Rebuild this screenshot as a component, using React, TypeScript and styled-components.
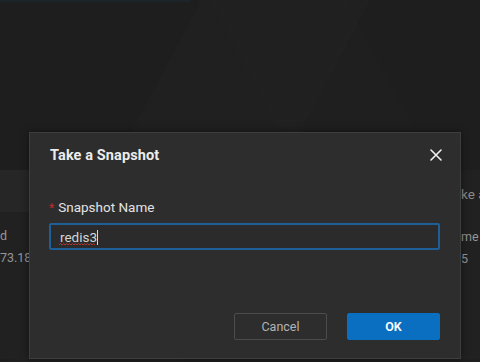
import { useState } from "react";
import styled, { createGlobalStyle } from "styled-components";

const GlobalStyle = createGlobalStyle`
  html, body {
    margin: 0;
    padding: 0;
    background: #1d1d1d;
    font-family: Roboto, "Noto Sans", "Liberation Sans", sans-serif;
  }
`;

const Page = styled.div`
  position: relative;
  width: 480px;
  height: 362px;
  overflow: hidden;
  background:
    linear-gradient(118deg, transparent 0 30%, rgba(255, 255, 255, 0.006) 30% 55%, transparent 55%),
    linear-gradient(62deg, transparent 0 60%, rgba(255, 255, 255, 0.005) 60% 80%, transparent 80%),
    #1e1e1e;
`;

const TopBar = styled.div`
  height: 2px;
  width: 190px;
  background: #1c2529;
`;

const Backdrop = styled.div`
  display: grid;
  grid-template-columns: 40px 1fr 33px;
  padding-top: 168px;
`;

const SidePanel = styled.div`
  display: flex;
  flex-direction: column;
  background: #212121;
  white-space: nowrap;
`;

const Band = styled.div<{ $h: number; $tone?: string; $pad?: number }>`
  height: ${({ $h }) => $h}px;
  display: flex;
  align-items: center;
  background: ${({ $tone }) => $tone || "transparent"};
  padding-left: ${({ $pad }) => $pad ?? 0}px;
`;

const Heading = styled.span`
  font-size: 13.5px;
  color: #8a8a8a;
`;

const Value = styled.span`
  color: #959595;
  font-size: 12.5px;
`;

const Dialog = styled.div`
  position: absolute;
  left: 29px;
  top: 132px;
  width: 430px;
  height: 225px;
  background: #2d2d2d;
  border: 1px solid #3e3e3e;
  box-shadow: 0 0 8px rgba(0, 0, 0, 0.45);
  display: flex;
  flex-direction: column;
`;

const Header = styled.div`
  display: flex;
  align-items: center;
  justify-content: space-between;
  padding: 6px 16px 0 20px;
  height: 32px;
`;

const Title = styled.h2`
  margin: 0;
  font-size: 14.5px;
  font-weight: 700;
  color: #ececec;
  letter-spacing: 0.1px;
`;

const CloseButton = styled.button`
  width: 16px;
  height: 16px;
  padding: 0;
  border: 0;
  background: none;
  color: #f0f0f0;
  display: flex;
  align-items: center;
  justify-content: center;
  cursor: pointer;
`;

const Body = styled.div`
  padding: 28px 19px 0 19px;
  display: flex;
  flex-direction: column;
  gap: 8px;
`;

const Label = styled.label`
  display: flex;
  align-items: center;
  gap: 4px;
  font-size: 13.5px;
  color: #e2e2e2;
`;

const Required = styled.span`
  color: #c62828;
  font-size: 12px;
  margin-top: 2px;
`;

const InputWrap = styled.div`
  position: relative;
  width: 391px;
`;

const Input = styled.input`
  box-sizing: border-box;
  width: 100%;
  height: 27px;
  margin: 0;
  padding: 0 9px;
  background: #2b2b2b;
  border: 2px solid #1d5f96;
  border-radius: 2px;
  color: #d4d4d4;
  font-family: inherit;
  font-size: 13.5px;
  outline: none;
`;

const SpellMark = styled.svg`
  position: absolute;
  left: 10px;
  top: 5px;
  pointer-events: none;
`;

const Footer = styled.div`
  margin-top: auto;
  display: flex;
  justify-content: flex-end;
  gap: 20px;
  padding: 0 20px 18px 0;
`;

const Button = styled.button<{ $primary?: boolean }>`
  box-sizing: border-box;
  width: 93px;
  height: 27px;
  border-radius: 2px;
  font-family: inherit;
  font-size: 12.5px;
  font-weight: ${({ $primary }) => ($primary ? 600 : 400)};
  border: 1px solid ${({ $primary }) => ($primary ? "#0a6fc0" : "#4c4c4c")};
  background: ${({ $primary }) => ($primary ? "#0a6fc0" : "transparent")};
  color: ${({ $primary }) => ($primary ? "#ffffff" : "#b4b4b4")};
  cursor: pointer;
`;

export default function App() {
  const [name, setName] = useState("redis3");

  return (
    <Page>
      <GlobalStyle />
      <TopBar />
      <Backdrop>
        <SidePanel>
          <Band $h={42} $tone="#262626" />
          <Band $h={12} />
          <Band $h={22}>
            <Value>d</Value>
          </Band>
          <Band $h={22}>
            <Value>73.18</Value>
          </Band>
          <Band $h={90} />
        </SidePanel>
        <div />
        <SidePanel>
          <Band $h={12} />
          <Band $h={24} $pad={14}>
            <Heading>ke a</Heading>
          </Band>
          <Band $h={19} />
          <Band $h={22} $pad={14}>
            <Value>me</Value>
          </Band>
          <Band $h={22} $pad={14}>
            <Value>5</Value>
          </Band>
          <Band $h={90} />
        </SidePanel>
      </Backdrop>

      <Dialog role="dialog" aria-label="Take a Snapshot">
        <Header>
          <Title>Take a Snapshot</Title>
          <CloseButton aria-label="Close">
            <svg width="12" height="12" viewBox="0 0 12 12">
              <path d="M1 1 L11 11 M11 1 L1 11" stroke="currentColor" strokeWidth="1.6" strokeLinecap="round" />
            </svg>
          </CloseButton>
        </Header>
        <Body>
          <Label htmlFor="snapshot-name">
            <Required>*</Required>
            Snapshot Name
          </Label>
          <InputWrap>
            <Input
              id="snapshot-name"
              value={name}
              spellCheck
              onChange={(e) => setName(e.target.value)}
            />
            <SpellMark width="40" height="20" viewBox="0 0 40 20">
              <polyline
                points="0,17 1.5,15.5 3,17 4.5,15.5 6,17 7.5,15.5 9,17 10.5,15.5 12,17 13.5,15.5 15,17 16.5,15.5 18,17 19.5,15.5 21,17 22.5,15.5 24,17 25.5,15.5 27,17 28.5,15.5 30,17 31.5,15.5 33,17 34.5,15.5 36,17"
                fill="none"
                stroke="#c0392b"
                strokeWidth="0.9"
              />
              <line x1="38.5" y1="2" x2="38.5" y2="17" stroke="#d8d8d8" strokeWidth="1" />
            </SpellMark>
          </InputWrap>
        </Body>
        <Footer>
          <Button>Cancel</Button>
          <Button $primary>OK</Button>
        </Footer>
      </Dialog>
    </Page>
  );
}
